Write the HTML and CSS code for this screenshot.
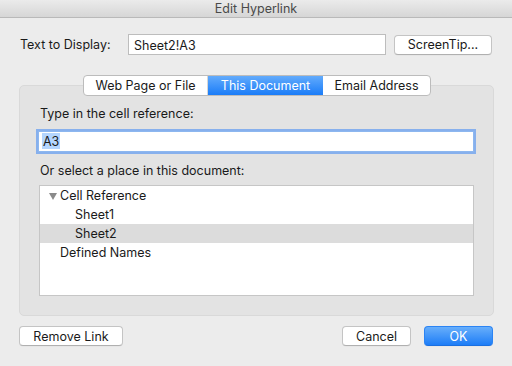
FILE: index.html
```html
<!DOCTYPE html>
<html lang="en">
<head>
    <meta charset="UTF-8">
    <title>Edit Hyperlink</title>
    <link rel="stylesheet" href="styles.css">
</head>
<body>
<div class="window">
    <div class="titlebar">Edit Hyperlink</div>

    <div class="dialog">
        <div class="display-row">
            <label class="display-label">Text to Display:</label>
            <div class="input display-input">Sheet2!A3</div>
            <button class="button screentip">ScreenTip...</button>
        </div>

        <div class="tabs">
            <div class="tab tab-web">Web Page or File</div>
            <div class="tab tab-doc active">This Document</div>
            <div class="tab tab-mail">Email Address</div>
        </div>

        <div class="group">
            <div class="form-label">Type in the cell reference:</div>
            <div class="input ref-input"><span class="selected">A3</span></div>

            <div class="form-label place-label">Or select a place in this document:</div>
            <div class="list">
                <div class="row"><span class="disclosure"></span>Cell Reference</div>
                <div class="row child">Sheet1</div>
                <div class="row child highlighted">Sheet2</div>
                <div class="row">Defined Names</div>
            </div>
        </div>

        <div class="footer">
            <button class="button remove">Remove Link</button>
            <div class="footer-right">
                <button class="button cancel">Cancel</button>
                <button class="button primary">OK</button>
            </div>
        </div>
    </div>
</div>
</body>
</html>
```

FILE: styles.css
```css
/* mac sheet dialog */
:root {
    --window-bg: #ececec;
    --group-bg: #e3e3e3;
    --border: #c3c3c3;
    --text: #1a1a1a;
    --blue-top: #62abfc;
    --blue-bottom: #1a7cf8;
}

* {
    box-sizing: border-box;
}

body {
    margin: 0;
    font-family: Inter, "Liberation Sans", Arial, sans-serif;
    font-size: 12.5px;
    color: var(--text);
    background: var(--window-bg);
}

.window {
    width: 512px;
    height: 366px;
    background: var(--window-bg);
    overflow: hidden;
}

.titlebar {
    height: 18px;
    line-height: 17px;
    text-align: center;
    color: #4a4a4a;
    background: linear-gradient(#ebebeb, #d6d6d6);
    border-bottom: 1px solid #b9b9b9;
}

.dialog {
    padding: 0 18px 0 19px;
}

.display-row {
    display: flex;
    align-items: center;
    margin-top: 16px;
    height: 21px;
}

.display-label {
    width: 109px;
    padding-left: 1px;
}

.input {
    background: white;
    border: 1px solid #bdbdbd;
    height: 21px;
    line-height: 19px;
    padding: 0 4px;
    white-space: nowrap;
}

.display-input {
    width: 258px;
    padding-left: 5px;
    line-height: 21px;
}

.button {
    font-family: inherit;
    font-size: 12.5px;
    color: var(--text);
    background: white;
    border: 1px solid #c4c4c4;
    border-bottom-color: #b0b0b0;
    border-radius: 4px;
    height: 20px;
    padding: 0;
    box-shadow: 0 0.5px 0 rgba(0, 0, 0, 0.05);
}

.screentip {
    margin-left: 8px;
    width: 98px;
}

.tabs {
    position: relative;
    z-index: 1;
    display: flex;
    width: 348px;
    height: 21px;
    margin: 20px 0 -11px 64px;
    background: white;
    border: 1px solid #bcbcbc;
    border-radius: 4px;
    overflow: hidden;
}

.tab {
    height: 19px;
    line-height: 19px;
    text-align: center;
    border-right: 1px solid #d6d6d6;
}

.tab:last-child {
    border-right: none;
}

.tab-web {
    width: 124px;
}

.tab-doc {
    width: 115px;
}

.tab-mail {
    flex: 1;
}

.tab.active {
    color: white;
    background: linear-gradient(var(--blue-top), var(--blue-bottom));
    border-right: none;
}

.group {
    width: 475px;
    padding: 19px 19px 19px;
    background: var(--group-bg);
    border: 1px solid #d9d9d9;
    border-radius: 5px;
}

.form-label {
    height: 16px;
    line-height: 17px;
    padding-left: 1px;
}

.ref-input {
    width: calc(100% + 1px);
    margin: 10px 0 0 -1px;
    padding-left: 3px;
    border-color: #8db7ef;
    box-shadow: 0 0 0 2px rgba(104, 159, 240, 0.75);
}

.selected {
    background: #b4d5fe;
    padding: 1px 1px 0;
}

.place-label {
    margin-top: 10px;
}

.list {
    margin-top: 7px;
    height: 111px;
    background: white;
    border: 1px solid #c6c6c6;
}

.row {
    height: 19px;
    line-height: 20px;
    padding-left: 20px;
    position: relative;
}

.row.child {
    padding-left: 35px;
}

.row.highlighted {
    background: #dcdcdc;
}

.disclosure {
    position: absolute;
    left: 9px;
    top: 7px;
    width: 0;
    height: 0;
    border-left: 4px solid transparent;
    border-right: 4px solid transparent;
    border-top: 7px solid #8a8a8a;
}

.footer {
    display: flex;
    justify-content: space-between;
    margin-top: 10px;
    padding-right: 1px;
}

.remove {
    width: 104px;
}

.footer-right {
    display: flex;
    gap: 13px;
}

.cancel {
    width: 69px;
}

.primary {
    width: 69px;
    color: white;
    border: 1px solid #2b84f4;
    border-bottom-color: #1a6fe0;
    background: linear-gradient(#67aefb, #1d7df7);
}
```
